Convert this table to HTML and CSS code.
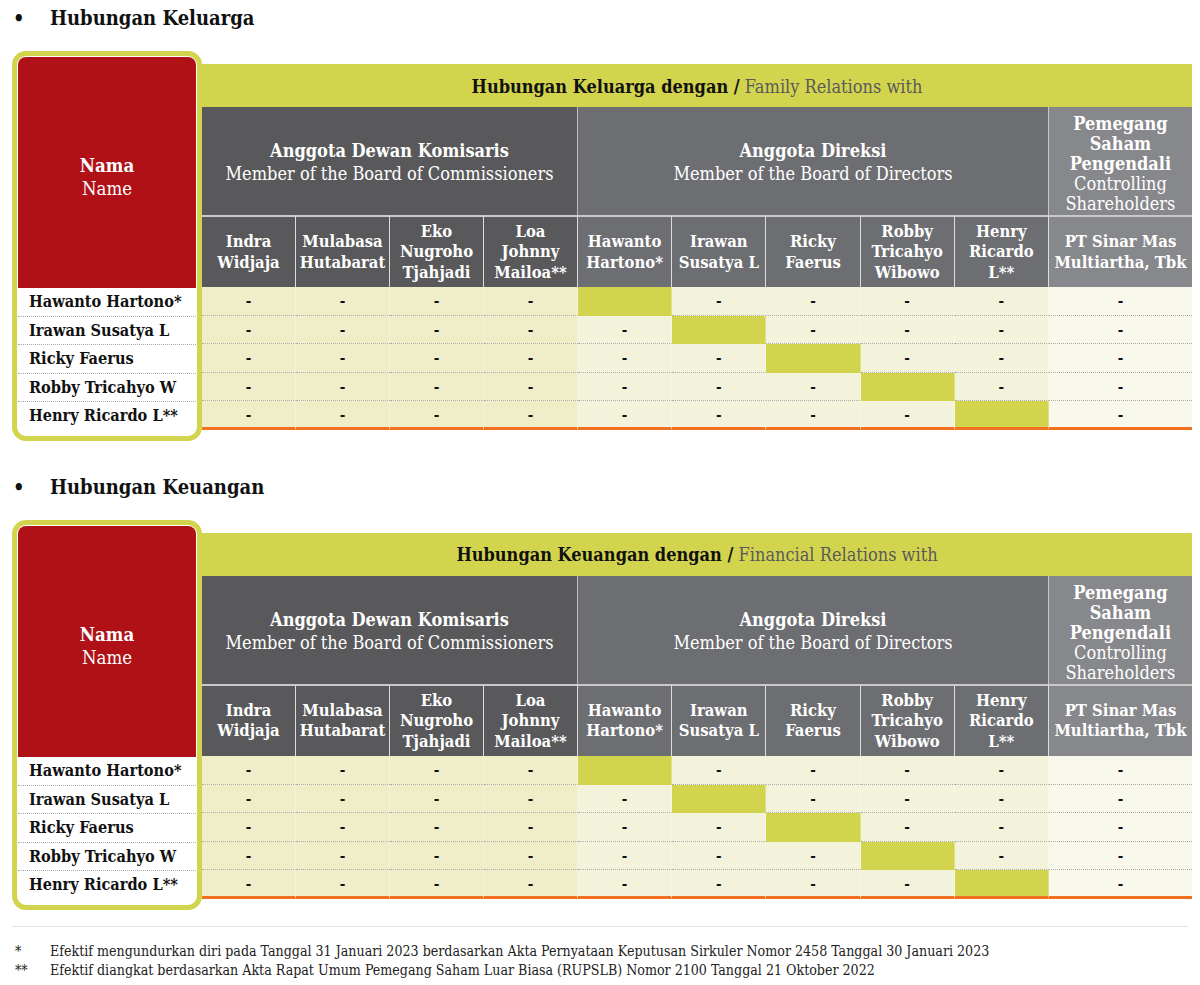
FILE: index.html
```html
<!DOCTYPE html>
<html lang="id">
<head>
<meta charset="utf-8">
<title>Hubungan Keluarga dan Keuangan</title>
<link rel="stylesheet" href="styles.css">
</head>
<body>
<section class="sec">
  <h2 class="title"><span class="bullet">•</span>Hubungan Keluarga</h2>
  <div class="block">
    <div class="panel">
      <div class="panel-head"><div class="nama">Nama</div><div class="name">Name</div></div>
      <div class="prow">Hawanto Hartono*</div>
      <div class="prow">Irawan Susatya L</div>
      <div class="prow">Ricky Faerus</div>
      <div class="prow">Robby Tricahyo W</div>
      <div class="prow last">Henry Ricardo L**</div>
    </div>
    <div class="tbl">
      <div class="band"><b>Hubungan Keluarga dengan /</b> Family Relations with</div>
      <div class="grp g1"><b>Anggota Dewan Komisaris</b><span>Member of the Board of Commissioners</span></div>
      <div class="grp g2"><b>Anggota Direksi</b><span>Member of the Board of Directors</span></div>
      <div class="grp g3"><b>Pemegang Saham Pengendali</b><span>Controlling Shareholders</span></div>
      <div class="sub s1">Indra Widjaja</div>
      <div class="sub s1">Mulabasa Hutabarat</div>
      <div class="sub s1">Eko Nugroho Tjahjadi</div>
      <div class="sub s1">Loa Johnny Mailoa**</div>
      <div class="sub s2">Hawanto Hartono*</div>
      <div class="sub s2">Irawan Susatya L</div>
      <div class="sub s2">Ricky Faerus</div>
      <div class="sub s2">Robby Tricahyo Wibowo</div>
      <div class="sub s2">Henry Ricardo L**</div>
      <div class="sub s3">PT Sinar Mas Multiartha, Tbk</div>

      <div class="c b1">-</div><div class="c b1">-</div><div class="c b1">-</div><div class="c b1">-</div><div class="c hl"></div><div class="c b2">-</div><div class="c b2">-</div><div class="c b2">-</div><div class="c b2">-</div><div class="c b3">-</div>
      <div class="c b1">-</div><div class="c b1">-</div><div class="c b1">-</div><div class="c b1">-</div><div class="c b2">-</div><div class="c hl"></div><div class="c b2">-</div><div class="c b2">-</div><div class="c b2">-</div><div class="c b3">-</div>
      <div class="c b1">-</div><div class="c b1">-</div><div class="c b1">-</div><div class="c b1">-</div><div class="c b2">-</div><div class="c b2">-</div><div class="c hl"></div><div class="c b2">-</div><div class="c b2">-</div><div class="c b3">-</div>
      <div class="c b1">-</div><div class="c b1">-</div><div class="c b1">-</div><div class="c b1">-</div><div class="c b2">-</div><div class="c b2">-</div><div class="c b2">-</div><div class="c hl"></div><div class="c b2">-</div><div class="c b3">-</div>
      <div class="c b1 lr">-</div><div class="c b1 lr">-</div><div class="c b1 lr">-</div><div class="c b1 lr">-</div><div class="c b2 lr">-</div><div class="c b2 lr">-</div><div class="c b2 lr">-</div><div class="c b2 lr">-</div><div class="c hl lr"></div><div class="c b3 lr">-</div>
    </div>
  </div>
</section>

<section class="sec sec2">
  <h2 class="title"><span class="bullet">•</span>Hubungan Keuangan</h2>
  <div class="block">
    <div class="panel">
      <div class="panel-head"><div class="nama">Nama</div><div class="name">Name</div></div>
      <div class="prow">Hawanto Hartono*</div>
      <div class="prow">Irawan Susatya L</div>
      <div class="prow">Ricky Faerus</div>
      <div class="prow">Robby Tricahyo W</div>
      <div class="prow last">Henry Ricardo L**</div>
    </div>
    <div class="tbl">
      <div class="band"><b>Hubungan Keuangan dengan /</b> Financial Relations with</div>
      <div class="grp g1"><b>Anggota Dewan Komisaris</b><span>Member of the Board of Commissioners</span></div>
      <div class="grp g2"><b>Anggota Direksi</b><span>Member of the Board of Directors</span></div>
      <div class="grp g3"><b>Pemegang Saham Pengendali</b><span>Controlling Shareholders</span></div>
      <div class="sub s1">Indra Widjaja</div>
      <div class="sub s1">Mulabasa Hutabarat</div>
      <div class="sub s1">Eko Nugroho Tjahjadi</div>
      <div class="sub s1">Loa Johnny Mailoa**</div>
      <div class="sub s2">Hawanto Hartono*</div>
      <div class="sub s2">Irawan Susatya L</div>
      <div class="sub s2">Ricky Faerus</div>
      <div class="sub s2">Robby Tricahyo Wibowo</div>
      <div class="sub s2">Henry Ricardo L**</div>
      <div class="sub s3">PT Sinar Mas Multiartha, Tbk</div>

      <div class="c b1">-</div><div class="c b1">-</div><div class="c b1">-</div><div class="c b1">-</div><div class="c hl"></div><div class="c b2">-</div><div class="c b2">-</div><div class="c b2">-</div><div class="c b2">-</div><div class="c b3">-</div>
      <div class="c b1">-</div><div class="c b1">-</div><div class="c b1">-</div><div class="c b1">-</div><div class="c b2">-</div><div class="c hl"></div><div class="c b2">-</div><div class="c b2">-</div><div class="c b2">-</div><div class="c b3">-</div>
      <div class="c b1">-</div><div class="c b1">-</div><div class="c b1">-</div><div class="c b1">-</div><div class="c b2">-</div><div class="c b2">-</div><div class="c hl"></div><div class="c b2">-</div><div class="c b2">-</div><div class="c b3">-</div>
      <div class="c b1">-</div><div class="c b1">-</div><div class="c b1">-</div><div class="c b1">-</div><div class="c b2">-</div><div class="c b2">-</div><div class="c b2">-</div><div class="c hl"></div><div class="c b2">-</div><div class="c b3">-</div>
      <div class="c b1 lr">-</div><div class="c b1 lr">-</div><div class="c b1 lr">-</div><div class="c b1 lr">-</div><div class="c b2 lr">-</div><div class="c b2 lr">-</div><div class="c b2 lr">-</div><div class="c b2 lr">-</div><div class="c hl lr"></div><div class="c b3 lr">-</div>
    </div>
  </div>
</section>

<div class="notes">
  <div class="note"><span class="mark">*</span><span>Efektif mengundurkan diri pada Tanggal 31 Januari 2023 berdasarkan Akta Pernyataan Keputusan Sirkuler Nomor 2458 Tanggal 30 Januari 2023</span></div>
  <div class="note"><span class="mark">**</span><span>Efektif diangkat berdasarkan Akta Rapat Umum Pemegang Saham Luar Biasa (RUPSLB) Nomor 2100 Tanggal 21 Oktober 2022</span></div>
</div>
</body>
</html>
```

FILE: styles.css
```css
* { box-sizing: border-box; }
html, body { margin: 0; padding: 0; background: #fff; }
body {
  padding: 4px 8px 0 12px;
  font-family: "DejaVu Serif", "Liberation Serif", serif;
  font-stretch: condensed;
  color: #111;
}
.title {
  margin: 0;
  font-size: 20px;
  line-height: 28px;
  font-weight: bold;
  display: flex;
  align-items: center;
}
.bullet {
  width: 38px;
  padding-left: 1px;
  font-size: 20px;
}
.sec2 { margin-top: 32px; }
.block {
  margin-top: 19px;
  display: flex;
  align-items: flex-start;
}
.panel {
  width: 190px;
  flex: none;
  border: 5px solid #d3d44e;
  border-radius: 14px;
  padding: 1px 1px 5px 1px;
  background: #fff;
}
.panel-head {
  height: 231px;
  background: #b01117;
  border-radius: 8px 8px 0 0;
  color: #fff;
  display: flex;
  flex-direction: column;
  justify-content: center;
  align-items: center;
  font-size: 18.5px;
  line-height: 23px;
  padding-top: 9px;
}
.nama { font-weight: bold; }
.prow {
  height: 28.6px;
  border-bottom: 1px dotted #ababab;
  font-size: 16.2px;
  font-weight: bold;
  line-height: 28px;
  padding-left: 11px;
  white-space: nowrap;
}
.prow.last { border-bottom: none; }
.tbl {
  flex: 1;
  margin-top: 13px;
  display: grid;
  grid-template-columns: repeat(4, 94px) repeat(5, 94.2px) 1fr;
  grid-template-rows: 43px 108px 72px repeat(5, 28.6px);
}
.band {
  grid-column: 1 / -1;
  background: #d3d44e;
  display: flex;
  align-items: center;
  justify-content: center;
  font-size: 18px;
  color: #5a5a5a;
  white-space: pre;
  padding-top: 1px;
}
.band b { color: #111; }
.grp {
  color: #fff;
  display: flex;
  flex-direction: column;
  align-items: center;
  justify-content: center;
  text-align: center;
  font-size: 18px;
  line-height: 23px;
  padding-top: 2px;
}
.grp b { font-weight: bold; }
.g1 { grid-column: span 4; background: #59595b; border-right: 1px solid #bdbdbf; }
.g2 { grid-column: span 5; background: #6d6e71; border-right: 1px solid #c8c8ca; }
.g3 { background: #87888b; line-height: 20px; padding: 6px 6px 0; }
.g3 b { display: block; }
.sub {
  color: #fff;
  font-weight: bold;
  font-size: 16.5px;
  line-height: 20.5px;
  text-align: center;
  display: flex;
  align-items: center;
  justify-content: center;
  border-top: 2px solid #c9c9cb;
  border-right: 1px solid #dcdcde;
  padding: 1px 2px 0;
}
.s1 { background: #59595b; }
.s2 { background: #6d6e71; }
.s3 { background: #87888b; border-right: none; }
.c {
  display: flex;
  align-items: center;
  justify-content: center;
  font-weight: bold;
  font-size: 15px;
  border-bottom: 1px dotted #ababab;
  border-right: 1px solid rgba(255,255,255,0.3);
  padding-top: 1px;
}
.b1 { background: #efeec9; }
.b2 { background: #f3f3dc; }
.b3 { background: #f8f8ec; border-right: none; }
.hl { background: #d3d44e; border-bottom-color: transparent; border-bottom-style: solid; }
.c.lr { border-bottom: 3px solid #f37021; }
.notes {
  margin-top: 16px;
  border-top: 1px solid #e2e2e2;
  padding-top: 15px;
  width: 1176px;
}
.note {
  display: flex;
  font-size: 14.1px;
  line-height: 19px;
  color: #222;
}
.mark { width: 38px; padding-left: 3px; flex: none; }
```
